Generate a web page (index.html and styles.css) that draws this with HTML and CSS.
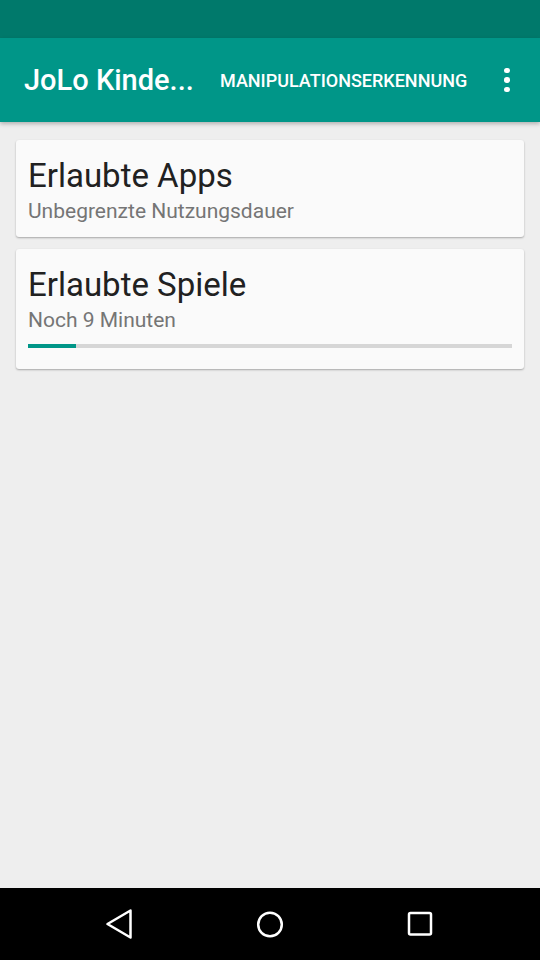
FILE: index.html
```html
<!DOCTYPE html>
<html>
<head>
    <title>JoLo Kindersicherung</title>
    <link rel="stylesheet" href="styles.css">
</head>
<body>
    <div class="status-bar"></div>

    <div class="app-bar">
        <div class="app-title">JoLo Kinde...</div>
        <div class="app-action">MANIPULATIONSERKENNUNG</div>
        <div class="overflow">
            <span class="dot"></span>
            <span class="dot"></span>
            <span class="dot"></span>
        </div>
    </div>

    <div class="content">
        <div class="card">
            <div class="card-title">Erlaubte Apps</div>
            <div class="card-sub">Unbegrenzte Nutzungsdauer</div>
        </div>
        <div class="card card-progress">
            <div class="card-title">Erlaubte Spiele</div>
            <div class="card-sub">Noch 9 Minuten</div>
            <div class="progress">
                <div class="progress-fill" style="width: 10%"></div>
            </div>
        </div>
    </div>

    <div class="nav-bar">
        <svg class="nav-icon" width="30" height="32" viewBox="0 0 30 32">
            <path d="M27.5 2.5 L4.5 16 L27.5 29.5 Z" fill="none" stroke="#ffffff" stroke-width="2.5" stroke-linejoin="round"/>
        </svg>
        <svg class="nav-icon" width="30" height="32" viewBox="0 0 30 32">
            <circle cx="16" cy="16.5" r="11.8" fill="none" stroke="#ffffff" stroke-width="2.5"/>
        </svg>
        <svg class="nav-icon" width="30" height="32" viewBox="0 0 30 32">
            <rect x="5" y="5" width="22" height="21.5" rx="1.5" fill="none" stroke="#ffffff" stroke-width="2.5"/>
        </svg>
    </div>
</body>
</html>
```

FILE: styles.css
```css
    body {
        margin: 0;
        background-color: #eeeeee;
        font-family: Roboto, "Liberation Sans", sans-serif;
        height: 960px;
        display: flex;
        flex-direction: column;
    }
    .status-bar {
        height: 38px;
        background-color: #00796b;
    }
    .app-bar {
        height: 84px;
        background-color: #009688;
        display: flex;
        align-items: center;
        padding-left: 24px;
        color: #ffffff;
        box-shadow: 0 2px 4px rgba(0, 0, 0, 0.25);
        position: relative;
        z-index: 1;
    }
    .app-title {
        font-size: 29px;
        font-weight: 500;
        width: 196px;
        white-space: nowrap;
    }
    .app-action {
        font-size: 18px;
        font-weight: 500;
        width: 262px;
    }
    .overflow {
        display: flex;
        flex-direction: column;
        gap: 4px;
        margin-left: 22px;
    }
    .dot {
        width: 5.5px;
        height: 5.5px;
        border-radius: 50%;
        background-color: #ffffff;
    }
    .content {
        flex: 1;
        padding: 18px 16px;
        display: flex;
        flex-direction: column;
        gap: 12px;
    }
    .card {
        background-color: #fafafa;
        border-radius: 3px;
        box-shadow: 0 1px 2px rgba(0, 0, 0, 0.3);
        padding: 16px 12px 10px 12px;
        height: 71px;
    }
    .card-progress {
        height: 94px;
    }
    .card-title {
        font-size: 33px;
        color: #212121;
        line-height: 40px;
    }
    .card-sub {
        font-size: 21px;
        color: #757575;
        line-height: 30px;
    }
    .progress {
        margin-top: 9px;
        height: 4px;
        background-color: #d6d6d6;
    }
    .progress-fill {
        height: 100%;
        background-color: #009688;
    }
    .nav-bar {
        height: 72px;
        background-color: #000000;
        display: flex;
        justify-content: space-between;
        align-items: center;
        padding: 0 106px 0 103px;
    }
    .nav-icon {
        display: block;
    }
```
